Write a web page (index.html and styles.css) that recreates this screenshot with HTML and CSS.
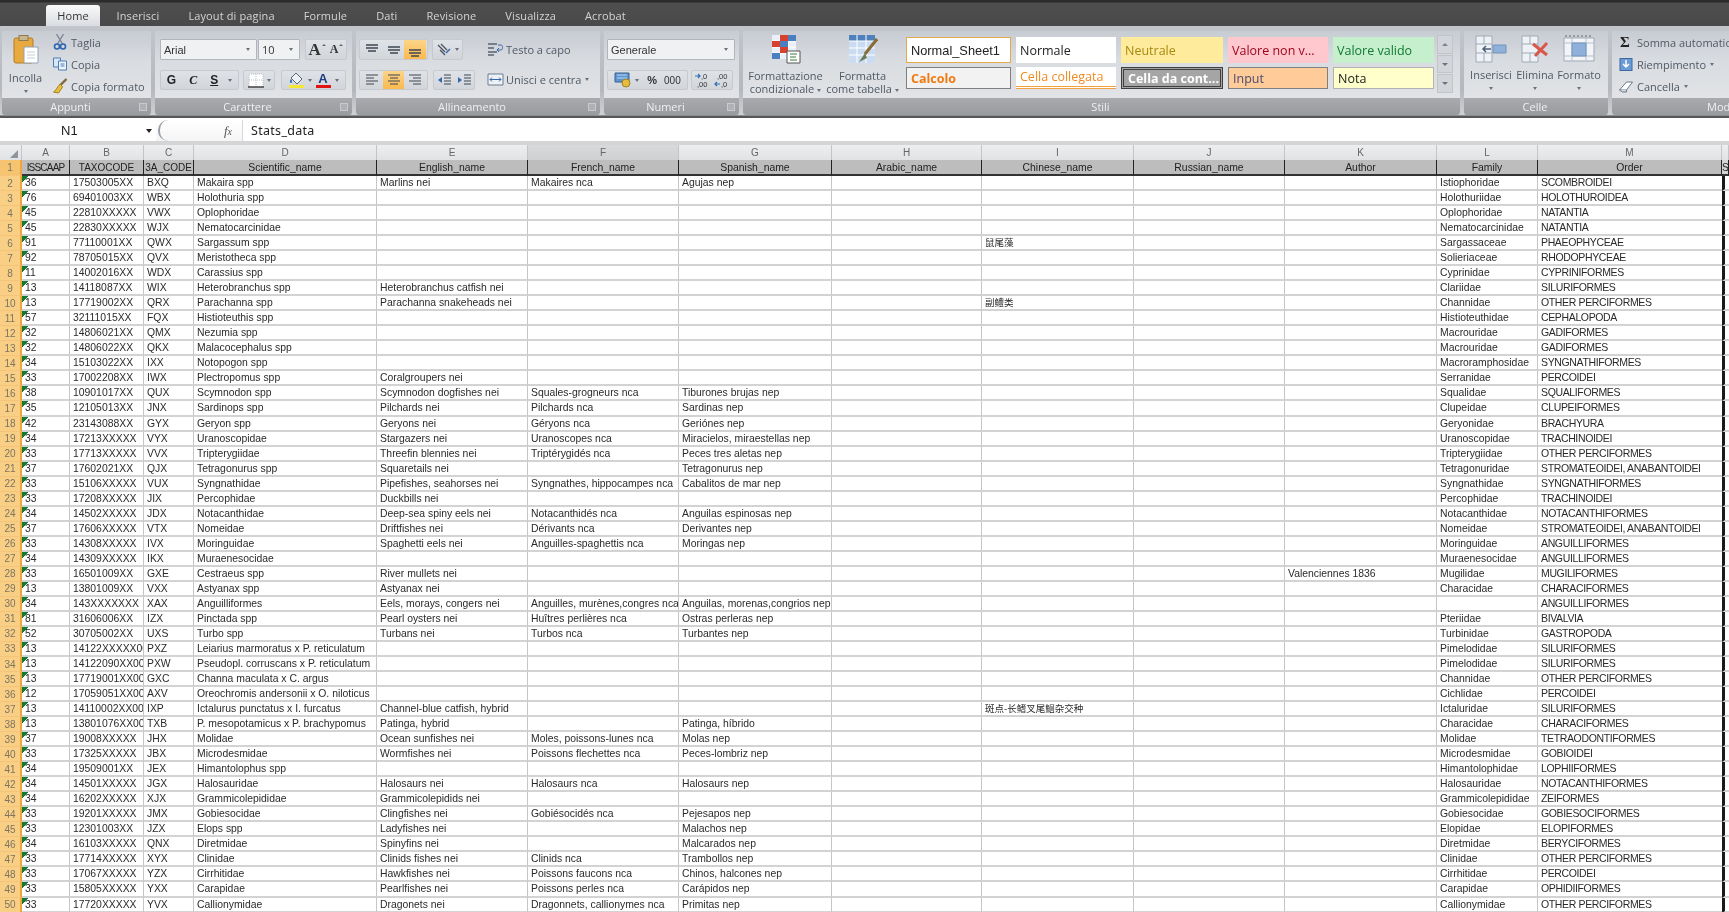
FILE: index.html
```html
<!DOCTYPE html>
<html lang="it">
<head>
<meta charset="utf-8">
<title>Stats_data</title>
<link rel="stylesheet" href="styles.css">
</head>
<body>
<svg class="defs" width="0" height="0" aria-hidden="true">
  <symbol id="grid-ins" viewBox="0 0 32 28">
    <path d="M1 1h16v26H1z" fill="#eef1f5" stroke="#a0a9b4"/><path d="M1 9h16M1 18h16M9 1v8M9 18v9" stroke="#a0a9b4"/>
    <path d="M18 10h13v8H18z" fill="#8fb0d8" stroke="#6f93bd"/><path d="M16 14H8m3-3-3 3 3 3" fill="none" stroke="#4a5f78" stroke-width="1.500"/>
  </symbol>
  <symbol id="grid-del" viewBox="0 0 28 28">
    <path d="M1 1h16v26H1z" fill="#eef1f5" stroke="#a0a9b4"/><path d="M1 9h16M1 18h16M9 1v8M9 18v9" stroke="#a0a9b4"/>
    <path d="M12 9l14 11M26 8L14 21" stroke="#d9574a" stroke-width="3"/>
  </symbol>
  <symbol id="grid-fmt" viewBox="0 0 32 28">
    <path d="M1 3h30v23H1z" fill="#f2f4f7" stroke="#a0a9b4"/><path d="M1 8h30M1 21h30M9 3v23M23 3v23" stroke="#b8c0ca"/>
    <path d="M9 8h14v13H9z" fill="#8fb0d8" stroke="#6f93bd"/><path d="M2 1h28" stroke="#666" stroke-dasharray="2 2"/>
  </symbol>
</svg>

<header class="tabbar">
  <span class="tab tab-active">Home</span>
  <span class="tab">Inserisci</span>
  <span class="tab">Layout di pagina</span>
  <span class="tab">Formule</span>
  <span class="tab">Dati</span>
  <span class="tab">Revisione</span>
  <span class="tab">Visualizza</span>
  <span class="tab">Acrobat</span>
</header>

<section class="ribbon">
  <div class="group g-appunti">
    <div class="body">
      <div class="paste">
        <svg width="26" height="29" viewBox="0 0 26 29"><rect x="1" y="3" width="19" height="25" rx="2" fill="#e8a93f" stroke="#b47c22"/><rect x="6" y="0.5" width="9" height="5" fill="#c9b78c" stroke="#8a7a55"/><path d="M11 12h14v16H11z" fill="#fff" stroke="#93a2b5"/><path d="M14 17h8M14 20h8M14 23h8" stroke="#c6ced8"/></svg>
        <span class="paste-label">Incolla</span>
        <span class="caret"></span>
      </div>
      <div class="clip-list">
        <div class="clip-item"><svg width="13" height="16" viewBox="0 0 13 16"><path d="M3 0l6 10M10 0L4 10" stroke="#7d8794" stroke-width="1.400"/><circle cx="3.500" cy="12.500" r="2.500" fill="none" stroke="#2f66b0" stroke-width="1.600"/><circle cx="9.500" cy="12.500" r="2.500" fill="none" stroke="#2f66b0" stroke-width="1.600"/></svg><span>Taglia</span></div>
        <div class="clip-item"><svg width="15" height="14" viewBox="0 0 15 14"><path d="M1 1h7v9H1z" fill="#d9e6f5" stroke="#4d7cb5"/><path d="M6 4h8v9H6z" fill="#eef4fb" stroke="#4d7cb5"/><path d="M8 7h4M8 9h4" stroke="#4d7cb5"/></svg><span>Copia</span></div>
        <div class="clip-item"><svg width="15" height="16" viewBox="0 0 15 16"><path d="M14 1L7 8" stroke="#7a6a3a" stroke-width="2.400"/><path d="M8 6l2 3-4 6-5-1c3-1 3-5 7-8z" fill="#e9bf3e" stroke="#a3801f"/></svg><span>Copia formato</span></div>
      </div>
    </div>
    <div class="caption"><span>Appunti</span><i class="launcher"></i></div>
  </div>

  <div class="group g-carattere">
    <div class="body stacked">
      <div class="row">
        <div class="select w-font"><span>Arial</span><span class="caret"></span></div>
        <div class="select w-size"><span>10</span><span class="caret"></span></div>
        <div class="tools w-grow"><b class="a-big">A</b><i class="tick"></i><b class="a-small">A</b><i class="tick"></i></div>
      </div>
      <div class="row row-second">
        <div class="tools w-gcs"><b class="gl-g">G</b><i class="gl-c">C</i><u class="gl-s">S</u><span class="caret"></span></div>
        <div class="tools w-border"><svg width="16" height="15" viewBox="0 0 16 15"><path d="M1 1h14v13H1z" fill="#fff" stroke="#b7bec8" stroke-dasharray="1 1"/><path d="M8 1v13M1 7h14" stroke="#b7bec8" stroke-dasharray="1 1"/><path d="M0 14h16" stroke="#444" stroke-width="1.500"/></svg><span class="caret"></span></div>
        <div class="tools w-color">
          <span class="swatch"><svg width="15" height="13" viewBox="0 0 15 13"><path d="M7 1l6 6-5 5-6-6z" fill="#eef1f4" stroke="#5d6670"/><path d="M2 7c-2 2-1 4 0 4s2-2 0-4z" fill="#3a78c0"/></svg><i class="bar bar-yellow"></i></span><span class="caret"></span>
          <span class="swatch"><b class="gl-a">A</b><i class="bar bar-red"></i></span><span class="caret"></span>
        </div>
      </div>
    </div>
    <div class="caption"><span>Carattere</span><i class="launcher"></i></div>
  </div>

  <div class="group g-allinea">
    <div class="body split">
      <div class="stacked">
        <div class="row">
          <div class="tools w-align">
            <span class="ai"><svg width="14" height="14" viewBox="0 0 14 14"><path d="M1 2h12M1 5h12M3 8h8" stroke="#3f4650" stroke-width="1.300"/></svg></span>
            <span class="ai"><svg width="14" height="14" viewBox="0 0 14 14"><path d="M1 4h12M1 7h12M3 10h8" stroke="#3f4650" stroke-width="1.300"/></svg></span>
            <span class="ai ai-on"><svg width="14" height="14" viewBox="0 0 14 14"><path d="M1 7h12M1 10h12M3 13h8" stroke="#3f4650" stroke-width="1.300"/></svg></span>
          </div>
          <div class="tools w-orient"><svg width="16" height="14" viewBox="0 0 16 14"><path d="M2 2l7 7M5 1l6 6M4 7l5 5" stroke="#4a5260" stroke-width="1.300"/><path d="M10 10l4-4" stroke="#3668a8" stroke-width="1.500"/></svg><span class="caret"></span></div>
        </div>
        <div class="row row-second">
          <div class="tools w-align">
            <span class="ai"><svg width="14" height="12" viewBox="0 0 14 12"><path d="M1 1h12M1 4h8M1 7h12M1 10h8" stroke="#3f4650" stroke-width="1.200"/></svg></span>
            <span class="ai ai-on"><svg width="14" height="12" viewBox="0 0 14 12"><path d="M1 1h12M3 4h8M1 7h12M3 10h8" stroke="#3f4650" stroke-width="1.200"/></svg></span>
            <span class="ai"><svg width="14" height="12" viewBox="0 0 14 12"><path d="M1 1h12M5 4h8M1 7h12M5 10h8" stroke="#3f4650" stroke-width="1.200"/></svg></span>
          </div>
          <div class="tools w-indent">
            <svg width="15" height="12" viewBox="0 0 15 12"><path d="M7 1h7M7 4h7M7 7h7M7 10h7" stroke="#3f4650"/><path d="M5 3L1 6l4 3z" fill="#3668a8"/></svg>
            <svg width="15" height="12" viewBox="0 0 15 12"><path d="M7 1h7M7 4h7M7 7h7M7 10h7" stroke="#3f4650"/><path d="M1 3l4 3-4 3z" fill="#3668a8"/></svg>
          </div>
        </div>
      </div>
      <div class="merge-list">
        <div class="merge-item"><svg width="17" height="15" viewBox="0 0 17 15"><path d="M1 2h9M1 6h6M1 10h9M1 13h6" stroke="#59636f" stroke-width="1.300"/><path d="M11 3h3c2 0 2 5 0 5h-4m2-2-2 2 2 2" fill="none" stroke="#3668a8"/></svg><span>Testo a capo</span></div>
        <div class="merge-item"><svg width="17" height="13" viewBox="0 0 17 13"><path d="M1 1h15v11H1z" fill="#eef2f7" stroke="#6b7c90"/><path d="M3 6.500h11M3 6.500l2-2M3 6.500l2 2M14 6.500l-2-2M14 6.500l-2 2" stroke="#3668a8"/></svg><span>Unisci e centra</span><span class="caret"></span></div>
      </div>
    </div>
    <div class="caption"><span>Allineamento</span><i class="launcher"></i></div>
  </div>

  <div class="group g-numeri">
    <div class="body stacked">
      <div class="row"><div class="select w-fmt"><span>Generale</span><span class="caret"></span></div></div>
      <div class="row row-second">
        <div class="tools w-money"><svg width="18" height="16" viewBox="0 0 18 16"><path d="M1 1h14v9H1z" fill="#5d95d2" stroke="#36618f"/><path d="M3 3h10M3 6h10" stroke="#bcd6f0"/><circle cx="12" cy="11" r="4" fill="#e6bc3c" stroke="#a3801f"/></svg><span class="caret"></span><span class="glyph-pc">%</span><span class="glyph-k">000</span></div>
        <div class="tools w-dec">
          <svg width="16" height="16" viewBox="0 0 16 16"><path d="M1 4h5M4 2l2 2-2 2" fill="none" stroke="#2f6fb5" stroke-width="1.200"/><text x="7" y="7" class="dec-t">,0</text><text x="3" y="15" class="dec-t">,00</text></svg>
          <svg width="16" height="16" viewBox="0 0 16 16"><path d="M6 12H1M3 10l-2 2 2 2" fill="none" stroke="#2f6fb5" stroke-width="1.200"/><text x="3" y="7" class="dec-t">,00</text><text x="7" y="15" class="dec-t">,0</text></svg>
        </div>
      </div>
    </div>
    <div class="caption"><span>Numeri</span><i class="launcher"></i></div>
  </div>

  <div class="group g-stili">
    <div class="body styles">
      <div class="big-btn">
        <svg width="30" height="30" viewBox="0 0 30 30"><path d="M1 1h24v24H1z" fill="#eaf0f8"/><path d="M1 7h24M1 13h24M1 19h24M9 1v24M17 1v24" stroke="#fff"/><path d="M9 1h8v6H9zM1 7h8v6H1zM9 13h8v6H9z" fill="#d9412f"/><path d="M9 7h8v6H9zM17 1h8v6h-8zM1 19h8v6H1z" fill="#4c7fc0"/><path d="M16 17h13v12H16z" fill="#fff" stroke="#555"/><path d="M19 20h7M19 23l6 0M19 26h7" stroke="#3b7a3b"/></svg>
        <span class="big-label">Formattazione<br>condizionale<span class="caret"></span></span>
      </div>
      <div class="big-btn">
        <svg width="30" height="30" viewBox="0 0 30 30"><path d="M1 1h26v28H1z" fill="#c9dcf2"/><path d="M1 1h26v6H1z" fill="#4f81bd"/><path d="M1 7h26M1 14h26M1 21h26M9 1v28M18 1v28" stroke="#fff"/><path d="M29 5L17 20" stroke="#8a6b35" stroke-width="3"/><path d="M17 19l-6 9 8-4z" fill="#6c7a56"/></svg>
        <span class="big-label">Formatta<br>come tabella<span class="caret"></span></span>
      </div>
      <div class="gallery">
        <span class="st st-normal1">Normal_Sheet1</span>
        <span class="st st-normale">Normale</span>
        <span class="st st-neutrale">Neutrale</span>
        <span class="st st-bad">Valore non v...</span>
        <span class="st st-good">Valore valido</span>
        <span class="st st-calc">Calcolo</span>
        <span class="st st-link">Cella collegata</span>
        <span class="st st-check">Cella da cont...</span>
        <span class="st st-input">Input</span>
        <span class="st st-note">Nota</span>
      </div>
      <div class="scroller"><span class="sc"><i class="up"></i></span><span class="sc"><i class="down"></i></span><span class="sc"><i class="down"></i></span></div>
    </div>
    <div class="caption"><span>Stili</span></div>
  </div>

  <div class="group g-celle">
    <div class="body cells">
      <div class="cell-btn"><svg width="32" height="28"><use href="#grid-ins"/></svg><span>Inserisci</span><span class="caret"></span></div>
      <div class="cell-btn"><svg width="28" height="28"><use href="#grid-del"/></svg><span>Elimina</span><span class="caret"></span></div>
      <div class="cell-btn"><svg width="32" height="28"><use href="#grid-fmt"/></svg><span>Formato</span><span class="caret"></span></div>
    </div>
    <div class="caption"><span>Celle</span></div>
  </div>

  <div class="group g-modifica">
    <div class="body">
      <div class="clip-list">
        <div class="clip-item mod"><span class="sigma">Σ</span><span>Somma automatica</span><span class="caret"></span></div>
        <div class="clip-item mod"><svg width="13" height="13" viewBox="0 0 13 13"><rect x=".5" y=".5" width="12" height="12" fill="#6b9ad6" stroke="#3c6aa3"/><path d="M6.500 2v7M3.500 6l3 3 3-3" fill="none" stroke="#fff" stroke-width="1.500"/></svg><span>Riempimento</span><span class="caret"></span></div>
        <div class="clip-item mod"><svg width="15" height="13" viewBox="0 0 15 13"><path d="M1 10l7-8h6L8 10z" fill="#fff" stroke="#6b7a8c"/><path d="M1 10l3 2h4l0-2" fill="#d0d6de" stroke="#6b7a8c"/></svg><span>Cancella</span><span class="caret"></span></div>
      </div>
    </div>
    <div class="caption"><span>Modifica</span></div>
  </div>
</section>

<section class="formula">
  <div class="namebox"><span>N1</span><span class="caret dark"></span></div>
  <div class="fx"><span class="oval"></span><em>f<small>x</small></em></div>
  <div class="fvalue">Stats_data</div>
</section>

<main class="sheet-wrap">
<table class="sheet">
<colgroup><col class="c0"><col class="ca"><col class="cb"><col class="cc"><col class="cd"><col class="ce"><col class="cf"><col class="cg"><col class="ch"><col class="ci"><col class="cj"><col class="ck"><col class="cl"><col class="cm"><col class="cn"></colgroup>
<thead>
<tr class="letters"><th class="corner"><i></i></th><th>A</th><th>B</th><th>C</th><th>D</th><th>E</th><th class="hover">F</th><th>G</th><th>H</th><th>I</th><th>J</th><th>K</th><th>L</th><th>M</th><th></th></tr>
<tr class="heads"><th class="rh">1</th><td class="h-a">ISSCAAP</td><td class="h-b">TAXOCODE</td><td class="h-b">3A_CODE</td><td>Scientific_name</td><td>English_name</td><td>French_name</td><td>Spanish_name</td><td>Arabic_name</td><td>Chinese_name</td><td>Russian_name</td><td>Author</td><td>Family</td><td>Order</td><td class="h-n">S</td></tr>
</thead>
<tbody>
<tr><th>2</th><td>36<td>17503005XX<td>BXQ<td>Makaira spp<td>Marlins nei<td>Makaires nca<td>Agujas nep<td><td><td><td><td>Istiophoridae<td>SCOMBROIDEI<td></tr>
<tr><th>3</th><td>76<td>69401003XX<td>WBX<td>Holothuria spp<td><td><td><td><td><td><td><td>Holothuriidae<td>HOLOTHUROIDEA<td></tr>
<tr><th>4</th><td>45<td>22810XXXXX<td>VWX<td>Oplophoridae<td><td><td><td><td><td><td><td>Oplophoridae<td>NATANTIA<td></tr>
<tr><th>5</th><td>45<td>22830XXXXX<td>WJX<td>Nematocarcinidae<td><td><td><td><td><td><td><td>Nematocarcinidae<td>NATANTIA<td></tr>
<tr><th>6</th><td>91<td>77110001XX<td>QWX<td>Sargassum spp<td><td><td><td><td class="zh">鼠尾藻<td><td><td>Sargassaceae<td>PHAEOPHYCEAE<td></tr>
<tr><th>7</th><td>92<td>78705015XX<td>QVX<td>Meristotheca spp<td><td><td><td><td><td><td><td>Solieriaceae<td>RHODOPHYCEAE<td></tr>
<tr><th>8</th><td>11<td>14002016XX<td>WDX<td>Carassius spp<td><td><td><td><td><td><td><td>Cyprinidae<td>CYPRINIFORMES<td></tr>
<tr><th>9</th><td>13<td>14118087XX<td>WIX<td>Heterobranchus spp<td>Heterobranchus catfish nei<td><td><td><td><td><td><td>Clariidae<td>SILURIFORMES<td></tr>
<tr><th>10</th><td>13<td>17719002XX<td>QRX<td>Parachanna spp<td>Parachanna snakeheads nei<td><td><td><td class="zh">副鳢类<td><td><td>Channidae<td>OTHER PERCIFORMES<td></tr>
<tr><th>11</th><td>57<td>32111015XX<td>FQX<td>Histioteuthis spp<td><td><td><td><td><td><td><td>Histioteuthidae<td>CEPHALOPODA<td></tr>
<tr><th>12</th><td>32<td>14806021XX<td>QMX<td>Nezumia spp<td><td><td><td><td><td><td><td>Macrouridae<td>GADIFORMES<td></tr>
<tr><th>13</th><td>32<td>14806022XX<td>QKX<td>Malacocephalus spp<td><td><td><td><td><td><td><td>Macrouridae<td>GADIFORMES<td></tr>
<tr><th>14</th><td>34<td>15103022XX<td>IXX<td>Notopogon spp<td><td><td><td><td><td><td><td>Macroramphosidae<td>SYNGNATHIFORMES<td></tr>
<tr><th>15</th><td>33<td>17002208XX<td>IWX<td>Plectropomus spp<td>Coralgroupers nei<td><td><td><td><td><td><td>Serranidae<td>PERCOIDEI<td></tr>
<tr><th>16</th><td>38<td>10901017XX<td>QUX<td>Scymnodon spp<td>Scymnodon dogfishes nei<td>Squales-grogneurs nca<td>Tiburones brujas nep<td><td><td><td><td>Squalidae<td>SQUALIFORMES<td></tr>
<tr><th>17</th><td>35<td>12105013XX<td>JNX<td>Sardinops spp<td>Pilchards nei<td>Pilchards nca<td>Sardinas nep<td><td><td><td><td>Clupeidae<td>CLUPEIFORMES<td></tr>
<tr><th>18</th><td>42<td>23143088XX<td>GYX<td>Geryon spp<td>Geryons nei<td>Géryons nca<td>Geriónes nep<td><td><td><td><td>Geryonidae<td>BRACHYURA<td></tr>
<tr><th>19</th><td>34<td>17213XXXXX<td>VYX<td>Uranoscopidae<td>Stargazers nei<td>Uranoscopes nca<td>Miracielos, miraestellas nep<td><td><td><td><td>Uranoscopidae<td>TRACHINOIDEI<td></tr>
<tr><th>20</th><td>33<td>17713XXXXX<td>VVX<td>Tripterygiidae<td>Threefin blennies nei<td>Triptérygidés nca<td>Peces tres aletas nep<td><td><td><td><td>Tripterygiidae<td>OTHER PERCIFORMES<td></tr>
<tr><th>21</th><td>37<td>17602021XX<td>QJX<td>Tetragonurus spp<td>Squaretails nei<td><td>Tetragonurus nep<td><td><td><td><td>Tetragonuridae<td>STROMATEOIDEI, ANABANTOIDEI<td></tr>
<tr><th>22</th><td>33<td>15106XXXXX<td>VUX<td>Syngnathidae<td>Pipefishes, seahorses nei<td>Syngnathes, hippocampes nca<td>Cabalitos de mar nep<td><td><td><td><td>Syngnathidae<td>SYNGNATHIFORMES<td></tr>
<tr><th>23</th><td>33<td>17208XXXXX<td>JIX<td>Percophidae<td>Duckbills nei<td><td><td><td><td><td><td>Percophidae<td>TRACHINOIDEI<td></tr>
<tr><th>24</th><td>34<td>14502XXXXX<td>JDX<td>Notacanthidae<td>Deep-sea spiny eels nei<td>Notacanthidés nca<td>Anguilas espinosas nep<td><td><td><td><td>Notacanthidae<td>NOTACANTHIFORMES<td></tr>
<tr><th>25</th><td>37<td>17606XXXXX<td>VTX<td>Nomeidae<td>Driftfishes nei<td>Dérivants nca<td>Derivantes nep<td><td><td><td><td>Nomeidae<td>STROMATEOIDEI, ANABANTOIDEI<td></tr>
<tr><th>26</th><td>33<td>14308XXXXX<td>IVX<td>Moringuidae<td>Spaghetti eels nei<td>Anguilles-spaghettis nca<td>Moringas nep<td><td><td><td><td>Moringuidae<td>ANGUILLIFORMES<td></tr>
<tr><th>27</th><td>34<td>14309XXXXX<td>IKX<td>Muraenesocidae<td><td><td><td><td><td><td><td>Muraenesocidae<td>ANGUILLIFORMES<td></tr>
<tr><th>28</th><td>33<td>16501009XX<td>GXE<td>Cestraeus spp<td>River mullets nei<td><td><td><td><td><td>Valenciennes 1836<td>Mugilidae<td>MUGILIFORMES<td></tr>
<tr><th>29</th><td>13<td>13801009XX<td>VXX<td>Astyanax spp<td>Astyanax nei<td><td><td><td><td><td><td>Characidae<td>CHARACIFORMES<td></tr>
<tr><th>30</th><td>34<td>143XXXXXXX<td>XAX<td>Anguilliformes<td>Eels, morays, congers nei<td>Anguilles, murènes,congres nca<td>Anguilas, morenas,congrios nep<td><td><td><td><td><td>ANGUILLIFORMES<td></tr>
<tr><th>31</th><td>81<td>31606006XX<td>IZX<td>Pinctada spp<td>Pearl oysters nei<td>Huîtres perlières nca<td>Ostras perleras nep<td><td><td><td><td>Pteriidae<td>BIVALVIA<td></tr>
<tr><th>32</th><td>52<td>30705002XX<td>UXS<td>Turbo spp<td>Turbans nei<td>Turbos nca<td>Turbantes nep<td><td><td><td><td>Turbinidae<td>GASTROPODA<td></tr>
<tr><th>33</th><td>13<td>14122XXXXX00<td>PXZ<td>Leiarius marmoratus x P. reticulatum<td><td><td><td><td><td><td><td>Pimelodidae<td>SILURIFORMES<td></tr>
<tr><th>34</th><td>13<td>14122090XX00<td>PXW<td>Pseudopl. corruscans x P. reticulatum<td><td><td><td><td><td><td><td>Pimelodidae<td>SILURIFORMES<td></tr>
<tr><th>35</th><td>13<td>17719001XX001<td>GXC<td>Channa maculata x C. argus<td><td><td><td><td><td><td><td>Channidae<td>OTHER PERCIFORMES<td></tr>
<tr><th>36</th><td>12<td>17059051XX00<td>AXV<td>Oreochromis andersonii x O. niloticus<td><td><td><td><td><td><td><td>Cichlidae<td>PERCOIDEI<td></tr>
<tr><th>37</th><td>13<td>14110002XX001<td>IXP<td>Ictalurus punctatus x I. furcatus<td>Channel-blue catfish, hybrid<td><td><td><td class="zh">斑点-长鳍叉尾鮰杂交种<td><td><td>Ictaluridae<td>SILURIFORMES<td></tr>
<tr><th>38</th><td>13<td>13801076XX00<td>TXB<td>P. mesopotamicus x P. brachypomus<td>Patinga, hybrid<td><td>Patinga, híbrido<td><td><td><td><td>Characidae<td>CHARACIFORMES<td></tr>
<tr><th>39</th><td>37<td>19008XXXXX<td>JHX<td>Molidae<td>Ocean sunfishes nei<td>Moles, poissons-lunes nca<td>Molas nep<td><td><td><td><td>Molidae<td>TETRAODONTIFORMES<td></tr>
<tr><th>40</th><td>33<td>17325XXXXX<td>JBX<td>Microdesmidae<td>Wormfishes nei<td>Poissons flechettes nca<td>Peces-lombriz nep<td><td><td><td><td>Microdesmidae<td>GOBIOIDEI<td></tr>
<tr><th>41</th><td>34<td>19509001XX<td>JEX<td>Himantolophus spp<td><td><td><td><td><td><td><td>Himantolophidae<td>LOPHIIFORMES<td></tr>
<tr><th>42</th><td>34<td>14501XXXXX<td>JGX<td>Halosauridae<td>Halosaurs nei<td>Halosaurs nca<td>Halosaurs nep<td><td><td><td><td>Halosauridae<td>NOTACANTHIFORMES<td></tr>
<tr><th>43</th><td>34<td>16202XXXXX<td>XJX<td>Grammicolepididae<td>Grammicolepidids nei<td><td><td><td><td><td><td>Grammicolepididae<td>ZEIFORMES<td></tr>
<tr><th>44</th><td>33<td>19201XXXXX<td>JMX<td>Gobiesocidae<td>Clingfishes nei<td>Gobiésocidés nca<td>Pejesapos nep<td><td><td><td><td>Gobiesocidae<td>GOBIESOCIFORMES<td></tr>
<tr><th>45</th><td>33<td>12301003XX<td>JZX<td>Elops spp<td>Ladyfishes nei<td><td>Malachos nep<td><td><td><td><td>Elopidae<td>ELOPIFORMES<td></tr>
<tr><th>46</th><td>34<td>16103XXXXX<td>QNX<td>Diretmidae<td>Spinyfins nei<td><td>Malcarados nep<td><td><td><td><td>Diretmidae<td>BERYCIFORMES<td></tr>
<tr><th>47</th><td>33<td>17714XXXXX<td>XYX<td>Clinidae<td>Clinids fishes nei<td>Clinids nca<td>Trambollos nep<td><td><td><td><td>Clinidae<td>OTHER PERCIFORMES<td></tr>
<tr><th>48</th><td>33<td>17067XXXXX<td>YZX<td>Cirrhitidae<td>Hawkfishes nei<td>Poissons faucons nca<td>Chinos, halcones nep<td><td><td><td><td>Cirrhitidae<td>PERCOIDEI<td></tr>
<tr><th>49</th><td>33<td>15805XXXXX<td>YXX<td>Carapidae<td>Pearlfishes nei<td>Poissons perles nca<td>Carápidos nep<td><td><td><td><td>Carapidae<td>OPHIDIIFORMES<td></tr>
<tr><th>50</th><td>33<td>17720XXXXX<td>YVX<td>Callionymidae<td>Dragonets nei<td>Dragonnets, callionymes nca<td>Primitas nep<td><td><td><td><td>Callionymidae<td>OTHER PERCIFORMES<td></tr>
</tbody>
</table>
</main>
</body>
</html>
```

FILE: styles.css
```css
* { box-sizing: border-box; }
html, body { margin: 0; width: 1729px; height: 912px; overflow: hidden; background: #fff; }
body { font-family: "Open Sans", "Noto Sans", sans-serif; font-size: 11px; color: #4f5965; filter: blur(.35px); }
.defs { display: block; height: 0; }

/* tab strip */
.tabbar { height: 26px; display: flex; align-items: flex-end; padding-left: 46px; background: linear-gradient(#2b2b2b 0, #2b2b2b 2px, #4e4e4e 3px, #494949 100%); color: #d4d4d4; letter-spacing: .12px; }
.tab { height: 21px; line-height: 22px; padding: 0 14.5px; white-space: nowrap; }
.tab-active { width: 54px; padding: 0; margin-right: 2px; text-align: center; color: #333; background: linear-gradient(#fafafa, #d9dce1); border-radius: 3px 3px 0 0; }

/* ribbon */
.ribbon { height: 92px; display: flex; gap: 4px; padding: 5px 0 3px 2px; background: linear-gradient(#c2c5ca, #b5b8bd 70%, #cfd1d4 97%, #5a5a5a 97.500%, #555 100%); }
.group { display: flex; flex-direction: column; flex: none; height: 84px; border-radius: 3px; overflow: hidden; box-shadow: inset 0 0 0 1px #d9dbde; }
.g-appunti { width: 149px; }
.g-carattere { width: 197px; }
.g-allinea { width: 244px; }
.g-numeri { width: 135px; }
.g-stili { width: 717px; }
.g-celle { width: 144px; }
.g-modifica { width: 236px; }
.body { flex: 1; display: flex; background: linear-gradient(#c7ccd3, #d9dce0 45%, #e1e3e6); }
.caption { height: 17px; flex: none; display: flex; align-items: center; padding-right: 2px; color: #eef0f2; background: linear-gradient(#a8aaae, #999b9f); }
.caption span { flex: 1; text-align: center; line-height: 16px; }
.launcher { width: 8px; height: 8px; margin-right: 2px; flex: none; border: 1px solid #c8cacd; background: #aeb1b5; }
.caret { display: inline-block; width: 0; height: 0; flex: none; margin-left: 4px; vertical-align: middle; border: 2.5px solid transparent; border-top: 3px solid #69717c; border-bottom: 0; }
.caret.dark { border-top-color: #222; border-left-width: 3.5px; border-right-width: 3.5px; border-top-width: 4px; margin: 0; }

/* clipboard */
.paste { width: 47px; flex: none; display: flex; flex-direction: column; align-items: center; padding-top: 4px; }
.paste-label { margin-top: 6px; line-height: 15px; }
.paste .caret { margin: 5px 0 0; }
.clip-list { display: flex; flex-direction: column; padding-left: 3px; }
.clip-item { height: 22px; display: flex; align-items: center; }
.clip-item svg { width: 16px; flex: none; margin-right: 3px; }
.clip-item.mod { padding-left: 6px; }
.sigma { width: 14px; margin-right: 5px; font: bold 15px "Liberation Serif", serif; color: #222; text-align: center; }

/* font, alignment, number controls */
.stacked { display: flex; flex-direction: column; padding: 8px 0 0 5px; }
.g-allinea .stacked, .g-numeri .stacked { padding-left: 3px; }
.row { height: 21px; display: flex; gap: 1px; }
.row-second { height: 20px; margin-top: 10px; gap: 4px; }
.select { display: flex; align-items: center; justify-content: space-between; padding: 0 6px 0 3px; color: #333; background: #f0f1f3; border: 1px solid #b1b5bb; border-radius: 1px; }
.w-font { width: 97px; font-family: "Liberation Sans", sans-serif; }
.w-size { width: 42px; }
.w-fmt { width: 128px; font-family: "Liberation Sans", sans-serif; }
.tools { display: flex; align-items: center; justify-content: center; gap: 3px; background: linear-gradient(#dfe2e6, #d2d5da); border: 1px solid #c6c9ce; border-radius: 2px; }
.w-grow { width: 42px; margin-left: 4px; gap: 0; color: #333; font-family: "Liberation Serif", serif; }
.a-big { font-size: 17px; }
.a-small { font-size: 12px; margin-left: 4px; }
.tick { width: 0; height: 0; align-self: flex-start; margin: 4px 0 0 1px; border: 2px solid transparent; border-bottom: 2px solid #666; border-top: 0; }
.w-gcs { width: 79px; gap: 13px; color: #222; }
.gl-g { font: bold 12px "Liberation Sans", sans-serif; }
.gl-c { font: italic bold 12px "Liberation Serif", serif; }
.gl-s { font: bold 12px "Liberation Sans", sans-serif; }
.gl-a { font: bold 13px/12px "Liberation Sans", sans-serif; color: #1d3f82; }
.w-border { width: 32px; }
.w-border .caret, .w-gcs .caret, .w-color .caret { margin: 0; }
.w-gcs .caret { margin-left: -3px; }
.w-color { width: 65px; margin-left: 2px; gap: 4px; }
.swatch { display: flex; flex-direction: column; align-items: center; width: 15px; }
.swatch svg { display: block; }
.bar { display: block; width: 15px; height: 3px; }
.bar-yellow { background: #f5e634; }
.bar-red { background: #e11414; }
.split { gap: 12px; }
.w-align { width: 69px; gap: 0; padding: 0 1px; align-items: stretch; }
.ai { flex: 1; display: flex; align-items: center; justify-content: center; }
.ai-on { background: linear-gradient(#fcd58a, #fbb94e); }
.w-orient { width: 31px; margin-left: 3px; }
.w-orient .caret { margin: 0; }
.w-indent { width: 42px; gap: 5px; margin-left: 1px; }
.merge-list { display: flex; flex-direction: column; gap: 10px; padding-top: 8px; }
.merge-item { height: 20px; display: flex; align-items: center; white-space: nowrap; }
.merge-item svg { margin-right: 2px; }
.w-money { width: 81px; gap: 5px; color: #333; }
.w-money .caret { margin: 0 3px 0 -2px; }
.glyph-pc { font: bold 11px "Liberation Sans", sans-serif; margin-right: 2px; }
.glyph-k { font: 10px "Liberation Sans", sans-serif; }
.w-dec { width: 42px; gap: 4px; margin-left: -1px; }
.dec-t { font: 7.500px "Liberation Sans", sans-serif; fill: #333; }

/* styles gallery */
.styles { padding: 0 0 0 4px; }
.big-btn { width: 77px; flex: none; display: flex; flex-direction: column; align-items: center; padding-top: 3px; }
.big-label { margin-top: 5px; line-height: 13px; text-align: center; white-space: nowrap; }
.big-label .caret { margin-left: 3px; }
.gallery { display: grid; flex: none; grid-template-columns: 105px 100px 102px 100px 101px; grid-template-rows: 26px 22px; column-gap: 5px; row-gap: 4px; margin: 6px 0 0 5px; height: 52px; font-size: 12.500px; }
.st { display: flex; align-items: center; padding-left: 4px; white-space: nowrap; overflow: hidden; }
.st-normal1 { font: 12.800px "Liberation Sans", sans-serif; color: #222; background: #fff; border: 1px solid #e5a94a; }
.st-normale { color: #222; background: #fff; }
.st-neutrale { color: #a58a12; background: #ffeb9c; }
.st-bad { color: #9c0018; background: #ffc7ce; }
.st-good { color: #107a30; background: #c6efce; }
.st-calc { font-weight: 700; color: #f07a10; background: #f2f2f2; border: 1px solid #7f7f7f; }
.st-link { color: #f08a20; background: #fff; border-bottom: 3px double #f0a040; }
.st-check { font-weight: 700; color: #fff; background: #a5a5a5; border: 3px double #3f3f3f; }
.st-input { color: #4a4a70; background: #fc9; border: 1px solid #7f7f7f; }
.st-note { color: #222; background: #ffc; border: 1px solid #b2b2b2; }
.scroller { width: 16px; flex: none; margin: 4px 0 0 3px; height: 58px; display: flex; flex-direction: column; gap: 1px; }
.sc { flex: 1; display: flex; align-items: center; justify-content: center; background: #d2d5da; border: 1px solid #c1c4c9; }
.sc i { width: 0; height: 0; border: 3px solid transparent; }
.sc .up { border-bottom: 3px solid #7d848e; border-top: 0; }
.sc .down { border-top: 3px solid #6c737d; border-bottom: 0; }

/* cells and edit */
.cells { padding: 4px 0 0 5px; }
.cell-btn { width: 44px; flex: none; display: flex; flex-direction: column; align-items: center; }
.cell-btn span:not(.caret) { margin-top: 5px; line-height: 14px; }
.cell-btn .caret { margin: 5px 0 0; }
.g-modifica .clip-list { padding-left: 0; }

/* formula bar */
.formula { height: 27px; display: flex; padding-top: 2px; background: #fff; border-bottom: 4px solid #d4d5d7; font: 13px "Liberation Sans", sans-serif; color: #222; }
.namebox { width: 156px; flex: none; display: flex; align-items: center; justify-content: space-between; padding: 0 4px 0 61px; }
.fx { width: 87px; flex: none; display: flex; align-items: center; justify-content: flex-end; padding-right: 10px; border-right: 1px solid #d6d8db; background: linear-gradient(#fff, #f5f5f6); }
.fx .oval { flex: 1; align-self: stretch; margin: 0 12px 0 2px; border-left: 2px solid #9aa0a8; border-radius: 10px 0 0 10px; }
.fx em { font: italic 13px "Liberation Serif", serif; color: #555; }
.fx small { font-size: 10px; }
.fvalue { flex: 1; padding-left: 8px; line-height: 21px; letter-spacing: .3px; font-family: "Noto Sans", sans-serif; font-size: 12.500px; }

/* grid */
.sheet-wrap { height: 767px; overflow: hidden; }
.sheet { width: 1729px; table-layout: fixed; border-collapse: separate; border-spacing: 0; font: 10.400px/13px "Liberation Sans", sans-serif; color: #2a2a2a; }
.c0 { width: 22px; } .ca { width: 48px; } .cb { width: 74px; } .cc { width: 50px; } .cd { width: 183px; }
.ce { width: 151px; } .cf { width: 151px; } .cg { width: 153px; } .ch { width: 150px; } .ci { width: 152px; }
.cj { width: 151px; } .ck { width: 152px; } .cl { width: 101px; } .cm { width: 184px; } .cn { width: 7px; }
.sheet td, .sheet tbody th { height: 15.040px; padding: 0 0 0 3px; white-space: nowrap; overflow: hidden; border-right: 1px solid #c4c6c9; border-bottom: 2px solid #d2d3d5; font-weight: 400; }
.letters th { height: 15px; padding: 0; font-weight: 400; font-size: 10px; color: #666; text-align: center; background: linear-gradient(#eceef0, #e0e2e4); border-right: 1px solid #c2c4c7; }
.letters .hover { background: linear-gradient(#d8d9db, #cfd0d2); }
.corner { background: #d8dadd; }
.corner i { display: block; width: 0; height: 0; margin: 3px 3px 0 auto; border-left: 8px solid transparent; border-bottom: 8px solid #8e949b; }
.heads td { height: 16px; padding: 0; text-align: center; color: #222; background: #bdbdbd; border-right: 1px solid #222; border-bottom: 2px solid #333; }
.heads .h-a { font-size: 10px; letter-spacing: -.8px; }
.heads .h-b { font-size: 10px; }
.heads .h-n { text-align: left; background: #d4d4d4; }
.sheet tbody th, .heads .rh { padding: 0; font-weight: 400; font-size: 10px; text-align: center; color: #7c7460; background: #f9cf85; border-right: 2px solid #eea63a; border-bottom: 1px solid #f3c47a; }
.heads .rh { background: #f6c470; height: 16px; }
.sheet tbody td:nth-child(2) { background: linear-gradient(135deg, #137a30 4.500px, transparent 4.500px) no-repeat; padding-left: 3px; }
.sheet tbody td:nth-child(14) { font-size: 10.500px; letter-spacing: -.36px; border-right: 0; }
.sheet tbody td:nth-child(15) { border-left: 3px solid #1a1a1a; border-right: 0; padding: 0; }
.zh { font: 9.500px/13px "Noto Sans CJK SC", sans-serif; }
```
